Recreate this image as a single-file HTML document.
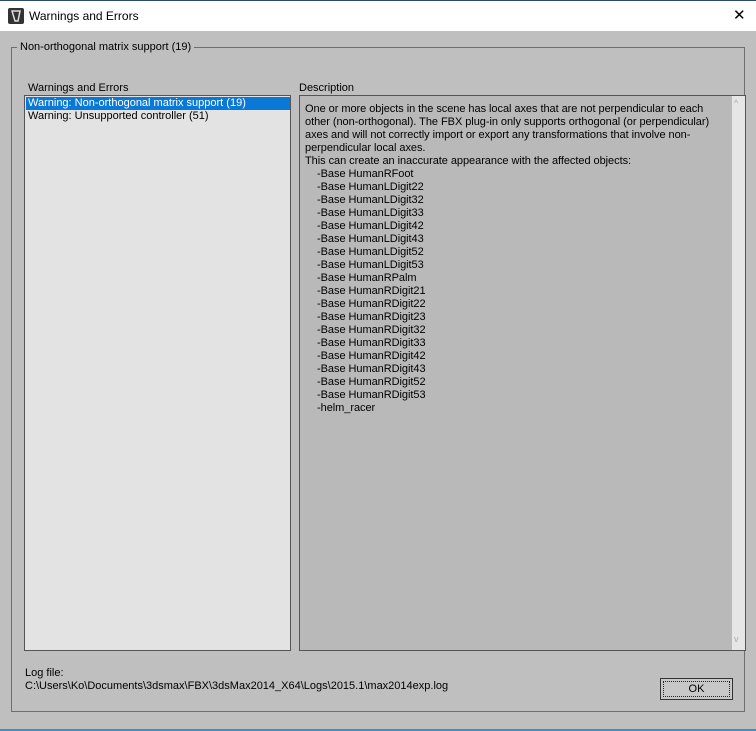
<!DOCTYPE html>
<html><head><style>
body{margin:0;width:756px;height:731px;background:#bfbfbf;font-family:"Liberation Sans",sans-serif;font-size:11px;color:#000;position:relative;overflow:hidden}
.abs{position:absolute}
#title{left:0;top:0;width:756px;height:31px;background:#fff;border-top:1px solid #2b4a66;box-sizing:border-box}
#title .t{left:29px;top:8px;font-size:12px}
#title .x{left:733px;top:5px;font-size:15px}
#grp{left:11px;top:47px;width:734px;height:665px;border:1px solid #6e6e6e;box-sizing:border-box}
#grpl{left:17px;top:41px;background:#bfbfbf;padding:0 3px}
#list{left:24px;top:95px;width:267px;height:556px;background:#e3e3e3;border:1px solid #555;box-sizing:border-box}
.sel{position:absolute;left:1px;top:1px;width:264px;height:13px;background:#0a78d7;color:#fff}
#desc{left:299px;top:95px;width:447px;height:556px;background:#b9b9b9;border:1px solid #555;box-sizing:border-box}
#sb{left:732px;top:96px;width:13px;height:554px;background:#e6e6e6}
.ln{line-height:13px;white-space:pre}
</style></head><body>
<div id="title" class="abs">
<svg class="abs" style="left:8px;top:7px" width="16" height="16"><rect width="16" height="16" rx="2" fill="#333"/><path d="M4 3h8l-2 10H7z" fill="none" stroke="#ddd" stroke-width="1.5"/></svg>
<div class="abs t">Warnings and Errors</div>
<div class="abs x">✕</div>
</div>
<div id="grp" class="abs"></div>
<div id="grpl" class="abs">Non-orthogonal matrix support (19)</div>
<div class="abs" style="left:28px;top:82px">Warnings and Errors</div>
<div class="abs" style="left:299px;top:82px">Description</div>
<div id="list" class="abs">
<div class="sel"><span style="padding-left:2px">Warning: Non-orthogonal matrix support (19)</span></div>
<div class="abs" style="left:3px;top:14px">Warning: Unsupported controller (51)</div>
</div>
<div id="desc" class="abs"><div class="ln" style="position:absolute;left:5px;top:7px;letter-spacing:-0.05px">One or more objects in the scene has local axes that are not perpendicular to each
other (non-orthogonal). The FBX plug-in only supports orthogonal (or perpendicular)
axes and will not correctly import or export any transformations that involve non-
perpendicular local axes.
This can create an inaccurate appearance with the affected objects:
    -Base HumanRFoot
    -Base HumanLDigit22
    -Base HumanLDigit32
    -Base HumanLDigit33
    -Base HumanLDigit42
    -Base HumanLDigit43
    -Base HumanLDigit52
    -Base HumanLDigit53
    -Base HumanRPalm
    -Base HumanRDigit21
    -Base HumanRDigit22
    -Base HumanRDigit23
    -Base HumanRDigit32
    -Base HumanRDigit33
    -Base HumanRDigit42
    -Base HumanRDigit43
    -Base HumanRDigit52
    -Base HumanRDigit53
    -helm_racer</div></div>
<div id="sb" class="abs"><div class="abs" style="left:2px;top:2px;color:#aaa;font-size:9px">^</div><div class="abs" style="left:2px;top:538px;color:#aaa;font-size:9px">v</div></div>
<div class="abs" style="left:25px;top:667px">Log file:</div>
<div class="abs" style="left:25px;top:680px">C:\Users\Ko\Documents\3dsmax\FBX\3dsMax2014_X64\Logs\2015.1\max2014exp.log</div>
<div class="abs" style="left:660px;top:678px;width:73px;height:22px;border:1px solid #333;background:#c8c8c8;box-sizing:border-box"><div style="margin:2px;border:1px dotted #222;height:14px;text-align:center;line-height:14px">OK</div></div>
<div class="abs" style="left:0;top:729px;width:756px;height:2px;background:#3a8fd0"></div>
</body></html>
